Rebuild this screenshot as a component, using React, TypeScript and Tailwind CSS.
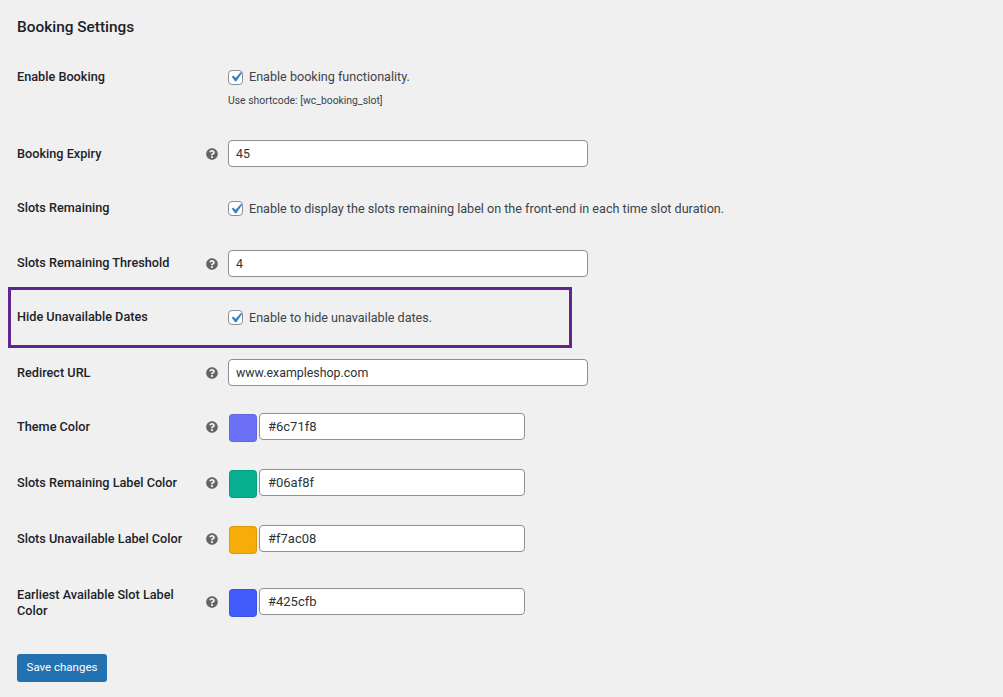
import { ReactNode } from "react";
import { FaQuestionCircle } from "react-icons/fa";

const Help = () => (
  <FaQuestionCircle size={12} className="text-[#646464] shrink-0" />
);

const Row = ({
  label,
  help = false,
  className = "",
  labelClass = "",
  children,
}: {
  label: ReactNode;
  help?: boolean;
  className?: string;
  labelClass?: string;
  children: ReactNode;
}) => (
  <div className={`flex items-center h-[27px] ${className}`}>
    <div className="w-[211px] shrink-0 flex items-center justify-between pr-[10px]">
      <span className={`w-[170px] text-[12.7px] leading-4 font-medium text-[#1d2327] ${labelClass}`}>
        {label}
      </span>
      {help && <Help />}
    </div>
    {children}
  </div>
);

const Check = ({ text }: { text: string }) => (
  <label className="flex items-center gap-[6px] h-4 text-[12.6px] leading-4 text-[#3c434a]">
    <span className="w-[15px] h-[15px] rounded-[4px] border border-[#8c8f94] bg-white flex items-center justify-center">
      <svg viewBox="0 0 20 20" className="w-[20px] h-[20px] shrink-0 fill-[#3582c4]">
        <path d="M14.83 4.89l1.34.94-5.81 8.38H9.02L5.78 9.67l1.34-1.25 2.57 2.4z" />
      </svg>
    </span>
    {text}
  </label>
);

const TextBox = ({ value }: { value: string }) => (
  <input
    readOnly
    value={value}
    className="w-[360px] h-[27px] px-[7px] rounded-[4px] border border-[#8c8f94] bg-white text-[12.4px] text-[#2c3338] outline-none"
  />
);

const ColorBox = ({ value, swatch }: { value: string; swatch: string }) => (
  <div className="flex items-start gap-[2px] h-[27px] ml-px">
    <span className={`w-[28px] h-[28px] mt-px rounded-[4px] border border-black/10 ${swatch}`} />
    <input
      readOnly
      value={value}
      className="w-[266px] h-[27px] px-2 rounded-[4px] border border-[#8c8f94] bg-white text-[13px] text-[#2c3338] outline-none"
    />
  </div>
);

export default function App() {
  return (
    <div className="h-[697px] bg-[#f0f0f1] pl-[17px] font-['Roboto',sans-serif] overflow-hidden">
      <h2 className="pt-[18px] text-[15.4px] leading-[18px] font-medium text-[#1d2327]">
        Booking Settings
      </h2>

      {/* Enable Booking */}
      <div className="flex mt-[33px]">
        <span className="w-[211px] shrink-0 text-[12.7px] leading-4 font-medium text-[#1d2327]">
          Enable Booking
        </span>
        <div className="flex flex-col">
          <Check text="Enable booking functionality." />
          <p className="mt-[8px] text-[10.4px] leading-4 text-[#3c434a]">
            Use shortcode: [wc_booking_slot]
          </p>
        </div>
      </div>

      <Row label="Booking Expiry" help className="mt-[31px]">
        <TextBox value="45" />
      </Row>

      <Row label="Slots Remaining" labelClass="-translate-y-px" className="mt-[28px]">
        <Check text="Enable to display the slots remaining label on the front-end in each time slot duration." />
      </Row>

      <Row label="Slots Remaining Threshold" labelClass="-translate-y-px" help className="mt-[28px]">
        <TextBox value="4" />
      </Row>

      {/* highlighted row */}
      <div className="mt-[10px] -ml-[9px] w-[564px] h-[61px] pl-[9px] border-[3px] border-[#5f2590] flex items-center">
        <Row label="Hide Unavailable Dates" labelClass="-translate-y-px" className="-ml-[3px]">
          <Check text="Enable to hide unavailable dates." />
        </Row>
      </div>

      <Row label="Redirect URL" help className="mt-[11px]">
        <TextBox value="www.exampleshop.com" />
      </Row>

      <Row label="Theme Color" help className="mt-[27px]">
        <ColorBox value="#6c71f8" swatch="bg-[#6c71f8]" />
      </Row>

      <Row label="Slots Remaining Label Color" help className="mt-[29px]">
        <ColorBox value="#06af8f" swatch="bg-[#06af8f]" />
      </Row>

      <Row label="Slots Unavailable Label Color" help className="mt-[29px]">
        <ColorBox value="#f7ac08" swatch="bg-[#f7ac08]" />
      </Row>

      <Row label="Earliest Available Slot Label Color" labelClass="translate-y-px" help className="mt-[36px]">
        <ColorBox value="#425cfb" swatch="bg-[#425cfb]" />
      </Row>

      <button className="mt-[39px] w-[90px] h-[28px] rounded-[3px] bg-[#2271b1] text-[11.5px] text-white">
        Save changes
      </button>
    </div>
  );
}
